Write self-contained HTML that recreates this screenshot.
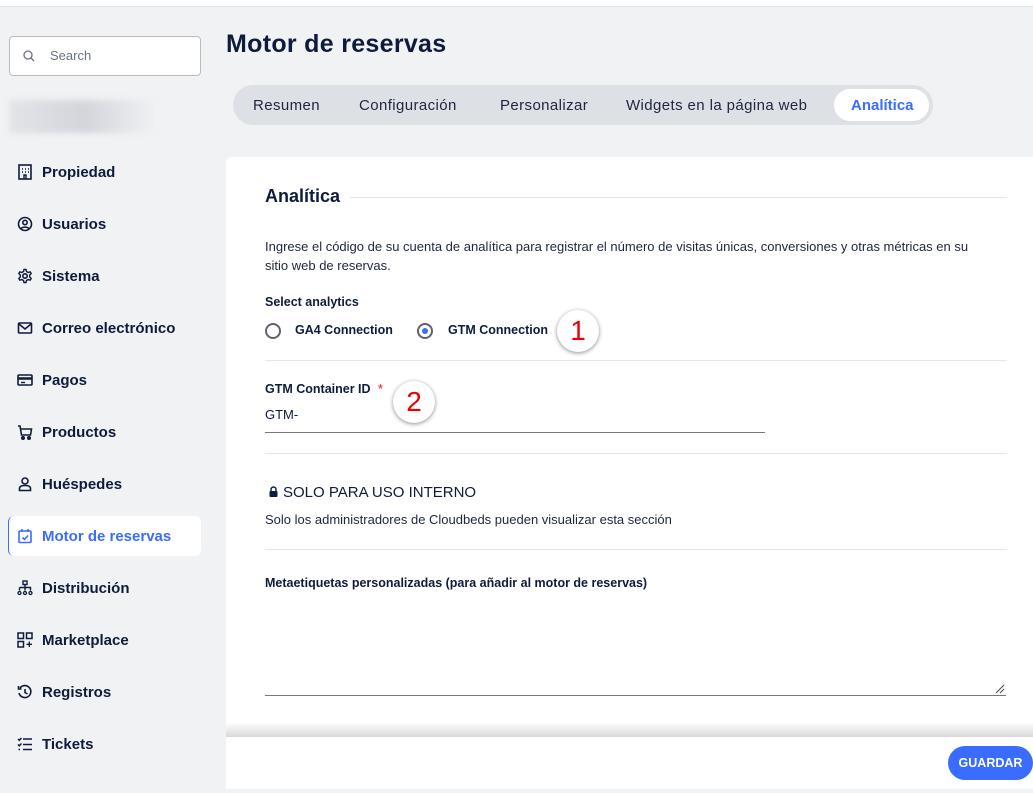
<!DOCTYPE html>
<html><head><meta charset="utf-8"><style>
*{margin:0;padding:0;box-sizing:border-box}
body{width:1033px;height:793px;background:#f1f2f4;font-family:"Liberation Sans",sans-serif;color:#0e1b3d;position:relative;overflow:hidden}
.a{position:absolute}
.nav{position:absolute;left:17px;font-size:15px;font-weight:bold;display:flex;align-items:center;height:20px}
.nav svg{width:16px;height:16px;margin-right:9px;fill:none;stroke:#0e1b3d;stroke-width:2}
.tab{position:absolute;top:97px;font-size:15px;color:#1e2640;letter-spacing:.4px}
.sep{position:absolute;left:265px;width:742px;height:1px;background:#e6e7ea}
.circ{position:absolute;width:42px;height:42px;border-radius:50%;background:#fff;box-shadow:0 1px 4px rgba(0,0,0,.45);color:#e00;font-size:28px;text-align:center;line-height:42px}
</style></head><body>
<div class="a" style="left:0;top:0;width:1033px;height:7px;background:#fff;border-bottom:1px solid #e2e3e6"></div>
<div class="a" style="left:9px;top:36px;width:192px;height:40px;background:#fff;border:1px solid #b9bcc3;border-radius:4px"></div>
<svg class="a" style="left:23px;top:50px" width="12" height="12" viewBox="0 0 12 12" fill="none" stroke="#6b7080" stroke-width="1.3"><circle cx="5" cy="5" r="4"/><path d="M8 8l3 3"/></svg>
<div class="a" style="left:50px;top:48px;font-size:13px;color:#6b7385">Search</div>
<div class="a" style="left:9px;top:100px;width:150px;height:33px;background:linear-gradient(90deg,#e2e4e8,#d3d5db 50%,#f1f2f4);filter:blur(3px)"></div>
<div class="a" style="left:8px;top:516px;width:193px;height:40px;background:#fff;border-radius:6px;border-left:1.5px solid #3a6cff"></div>

<div class="nav" style="top:162px"><svg viewBox="0 0 16 16"><rect x="2" y="1" width="12" height="14" stroke-width="1.6"/><path d="M5 5h1M8 5h1M11 5h1M5 8h1M8 8h1M11 8h1M7 15v-4h2v4" stroke-width="1.4"/></svg>Propiedad</div>
<div class="nav" style="top:214px"><svg viewBox="0 0 16 16"><circle cx="8" cy="8" r="6.5" stroke-width="1.6"/><circle cx="8" cy="6.5" r="2.2" stroke-width="1.6"/><path d="M4 13c1-2.5 7-2.5 8 0" stroke-width="1.6"/></svg>Usuarios</div>
<div class="nav" style="top:266px"><svg viewBox="0 0 16 16"><circle cx="8" cy="8" r="2.2" stroke-width="1.6"/><path d="M7 1.5h2l.5 2 1.7 1 2-.7 1 1.7-1.5 1.5v2l1.5 1.5-1 1.7-2-.7-1.7 1-.5 2H7l-.5-2-1.7-1-2 .7-1-1.7L3.3 9V7L1.8 5.5l1-1.7 2 .7 1.7-1z" stroke-width="1.4"/></svg>Sistema</div>
<div class="nav" style="top:318px"><svg viewBox="0 0 16 16"><rect x="1.5" y="3" width="13" height="10" rx="1" stroke-width="1.6"/><path d="M2 4l6 5 6-5" stroke-width="1.6"/></svg>Correo electrónico</div>
<div class="nav" style="top:370px"><svg viewBox="0 0 16 16"><rect x="1" y="3" width="14" height="10" rx="1" stroke-width="1.6"/><path d="M1 6.5h14" stroke-width="2.5"/><path d="M4 10.5h4" stroke-width="1.4"/></svg>Pagos</div>
<div class="nav" style="top:422px"><svg viewBox="0 0 16 16"><path d="M1 2h2l1.5 9h9l1-6H4" stroke-width="1.6"/><circle cx="6" cy="14" r="1" fill="#0e1b3d"/><circle cx="12" cy="14" r="1" fill="#0e1b3d"/></svg>Productos</div>
<div class="nav" style="top:474px"><svg viewBox="0 0 16 16"><circle cx="8" cy="5" r="3" stroke-width="1.6"/><path d="M2.5 14.5v-2c0-2 2-3 5.5-3s5.5 1 5.5 3v2z" stroke-width="1.6"/></svg>Huéspedes</div>
<div class="nav" style="top:526px;color:#3a6cff"><svg viewBox="0 0 16 16" style="stroke:#3a6cff"><rect x="2" y="3" width="12" height="11.5" rx="1" stroke-width="1.6"/><path d="M5 1v3M11 1v3M5.5 9.5l2 2 3.5-4" stroke-width="1.6"/></svg>Motor de reservas</div>
<div class="nav" style="top:578px"><svg viewBox="0 0 16 16"><rect x="6" y="1" width="4" height="3.5" stroke-width="1.4"/><path d="M8 4.5v3M2.5 7.5h11v3M8 7.5v3M2.5 7.5v3" stroke-width="1.4"/><circle cx="2.5" cy="13" r="1.5" stroke-width="1.3"/><circle cx="8" cy="13" r="1.5" stroke-width="1.3"/><circle cx="13.5" cy="13" r="1.5" stroke-width="1.3"/></svg>Distribución</div>
<div class="nav" style="top:630px"><svg viewBox="0 0 16 16"><rect x="1" y="1" width="5.5" height="5.5" stroke-width="1.5"/><rect x="9.5" y="1" width="5.5" height="5.5" stroke-width="1.5"/><rect x="1" y="9.5" width="5.5" height="5.5" stroke-width="1.5"/><path d="M12.3 9.5v5.5M9.5 12.3h5.5" stroke-width="1.3"/></svg>Marketplace</div>
<div class="nav" style="top:682px"><svg viewBox="0 0 16 16"><path d="M3 4a6 6 0 1 1-1 5M1.5 2v3h3M8 5v3.5l2.5 1.5" stroke-width="1.6"/></svg>Registros</div>
<div class="nav" style="top:734px"><svg viewBox="0 0 16 16"><path d="M1 3l1.3 1.3L4.5 2M1 8.5l1.3 1.3L4.5 7.5M1.5 13.5h1.5M6 3h9M6 8.5h9M6 13.5h9" stroke-width="1.5"/></svg>Tickets</div>

<div class="a" style="left:226px;top:30px;font-size:25px;font-weight:bold;color:#0e1b3d;letter-spacing:.3px">Motor de reservas</div>
<div class="a" style="left:233px;top:85px;width:700px;height:40px;background:#dde0e5;border-radius:20px"></div>
<div class="a" style="left:834px;top:89px;width:95px;height:32px;background:#fff;border-radius:16px"></div>
<div class="tab" style="left:253px">Resumen</div>
<div class="tab" style="left:359px">Configuración</div>
<div class="tab" style="left:500px">Personalizar</div>
<div class="tab" style="left:626px">Widgets en la página web</div>
<div class="tab" style="left:851px;color:#3a6cff;font-weight:bold;letter-spacing:0">Analítica</div>

<div class="a" style="left:226px;top:157px;width:807px;height:580px;background:#fff;border-radius:6px 0 0 0"></div>
<div class="a" style="left:265px;top:186px;font-size:18px;font-weight:bold">Analítica</div>
<div class="a" style="left:350px;top:197px;width:657px;height:1px;background:#e6e7ea"></div>
<div class="a" style="left:265px;top:237px;width:722px;font-size:13px;line-height:19px;color:#1e2640">Ingrese el código de su cuenta de analítica para registrar el número de visitas únicas, conversiones y otras métricas en su<br>sitio web de reservas.</div>
<div class="a" style="left:265px;top:295px;font-size:12.5px;font-weight:bold">Select analytics</div>
<div class="a" style="left:265px;top:323px;width:16px;height:16px;border:2px solid #5f6270;border-radius:50%"></div>
<div class="a" style="left:295px;top:323px;font-size:12.5px;font-weight:bold">GA4 Connection</div>
<div class="a" style="left:417px;top:323px;width:16px;height:16px;border:2px solid #5f6270;border-radius:50%"><div style="margin:3px;width:6px;height:6px;border-radius:50%;background:#3a6cff"></div></div>
<div class="a" style="left:448px;top:323px;font-size:12.5px;font-weight:bold">GTM Connection</div>
<div class="circ" style="left:557px;top:310px">1</div>
<div class="sep" style="top:360px"></div>
<div class="a" style="left:265px;top:382px;font-size:12.5px;font-weight:bold">GTM Container ID <span style="color:#e55;margin-left:4px">*</span></div>
<div class="circ" style="left:393px;top:381px">2</div>
<div class="a" style="left:265px;top:407px;font-size:13px">GTM-</div>
<div class="a" style="left:265px;top:432px;width:500px;height:1px;background:#777"></div>
<div class="sep" style="top:453px"></div>
<svg class="a" style="left:269px;top:486px" width="9" height="11" viewBox="0 0 9 11"><path d="M2 5V3.5a2.5 2.5 0 0 1 5 0V5" fill="none" stroke="#0e1b3d" stroke-width="1.4"/><rect x="0.5" y="5" width="8" height="6" rx="1" fill="#0e1b3d"/></svg>
<div class="a" style="left:283px;top:484px;font-size:15px">SOLO PARA USO INTERNO</div>
<div class="a" style="left:265px;top:512px;font-size:13px;color:#1e2640">Solo los administradores de Cloudbeds pueden visualizar esta sección</div>
<div class="sep" style="top:549px"></div>
<div class="a" style="left:265px;top:576px;font-size:12.5px;font-weight:bold">Metaetiquetas personalizadas (para añadir al motor de reservas)</div>
<div class="a" style="left:265px;top:695px;width:741px;height:1px;background:#777"></div>
<svg class="a" style="left:995px;top:684px" width="10" height="10" viewBox="0 0 10 10" stroke="#555" stroke-width="1.2"><path d="M1 9L9 1M5 9L9 5"/></svg>

<div class="a" style="left:226px;top:722px;width:807px;height:15px;background:linear-gradient(#fff,#d9d9d9)"></div>
<div class="a" style="left:226px;top:737px;width:807px;height:52px;background:#fff"></div>
<div class="a" style="left:948px;top:746px;width:85px;height:34px;background:#3a6cff;border-radius:17px;color:#fff;font-size:12.5px;font-weight:bold;line-height:34px;text-align:center">GUARDAR</div>
</body></html>
